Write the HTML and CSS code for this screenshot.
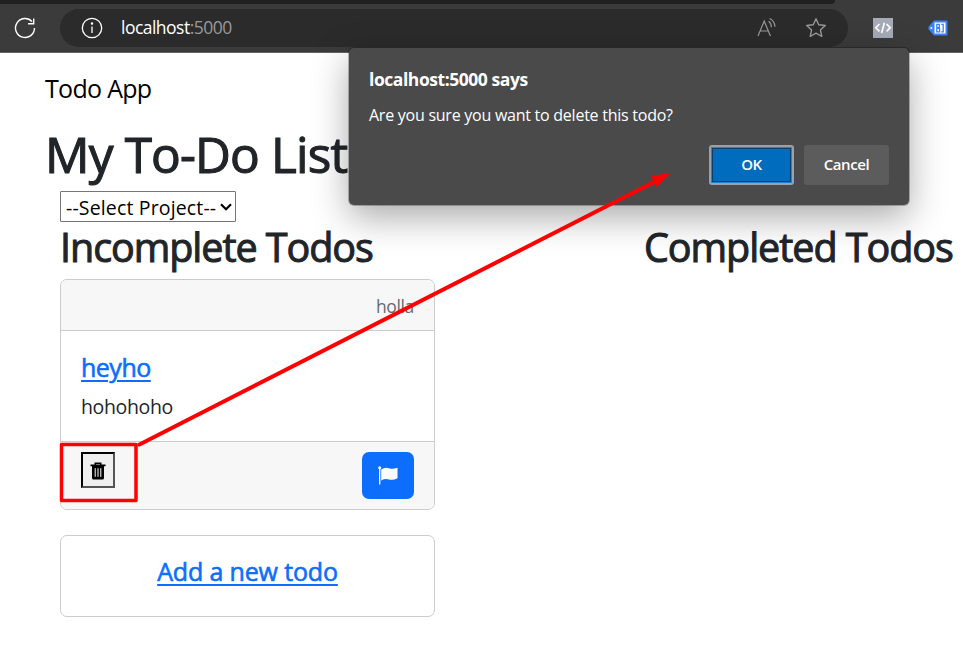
FILE: index.html
```html
<!DOCTYPE html>
<html lang="en">
<head>
<meta charset="utf-8">
<title>Todo App</title>
<link rel="stylesheet" href="styles.css">
</head>
<body>
<header class="browser">
  <div class="tab-strip"></div>
  <div class="toolbar">
    <svg class="reload" width="24" height="24" viewBox="0 0 24 24" fill="none" stroke="#fff" stroke-width="1.4"><path d="M21.500 12A9.500 9.500 0 1 1 19 5.600M20.700 2.500v5.200h-5.600"/></svg>
    <div class="address">
      <svg class="info" width="22" height="22" viewBox="0 0 22 22" fill="none" stroke="#fff" stroke-width="1.3"><circle cx="11" cy="11" r="9.700"/><path d="M11 9.500V16"/><circle cx="11" cy="6.600" r=".6" fill="#fff"/></svg>
      <span class="url">localhost<span class="port">:5000</span></span>
      <svg class="read" width="22" height="22" viewBox="0 0 22 22" fill="none" stroke="#999" stroke-width="1.2"><path d="M2 19 8.200 4l6.200 15M4.200 14h8M12.600 4.200q2.600 1.600 2.800 6M13.600 1.500q5 2.500 5.400 8.200"/></svg>
      <svg class="star" width="22" height="22" viewBox="0 0 22 22" fill="none" stroke="#999" stroke-width="1.4" stroke-linejoin="round"><path d="m11 1.800 2.700 6 6.600.7-4.900 4.400 1.400 6.600-5.800-3.400-5.800 3.400 1.400-6.600-4.900-4.400 6.600-.7z"/></svg>
    </div>
    <svg class="ext-code" width="20" height="20" viewBox="0 0 20 20"><path fill="#a5abb7" d="M0 0h20v20H0z"/><path d="M6.400 6 2.800 9.700l3.600 3.700M13.600 6l3.600 3.700-3.600 3.700M11.400 4.800 8.600 15" fill="none" stroke="#fff" stroke-width="1.700"/></svg>
    <svg class="ext-tag" width="20" height="16" viewBox="0 0 20 16"><path fill="#3b82f6" d="M6 .5h12.500a1 1 0 0 1 1 1v13a1 1 0 0 1-1 1H6L.5 9.200V6.800z"/><circle cx="3.400" cy="8" r="1" fill="#fff"/><path fill="#fff" d="M6.500 2.500h11v11h-11z"/><path d="M8.800 4.400h2.500v3.200H8.800zM8.800 8.300h2.800v3.500H8.800zM13.200 4.300h2v7.500h-2" fill="none" stroke="#3b82f6" stroke-width="1.300"/></svg>
  </div>
</header>

<main class="page">
  <nav class="brand"><span>Todo App</span></nav>
  <h1>My To-Do List</h1>
  <div class="content">
    <div class="picker">
      <select class="project"><option>--Select Project--</option></select>
      <svg class="chevron" width="12" height="8" viewBox="0 0 12 8"><path d="m1 1.200 5 5 5-5" fill="none" stroke="#000" stroke-width="2.200"/></svg>
    </div>
    <div class="columns">
      <section class="incomplete">
        <h2>Incomplete Todos</h2>
        <article class="card">
          <div class="card-head"><span>holla</span></div>
          <div class="card-body">
            <h5><a href="#">heyho</a></h5>
            <p>hohohoho</p>
          </div>
          <div class="card-foot">
            <button class="delete" aria-label="Delete"><svg width="16" height="18" viewBox="0 0 16 18"><path d="M5.300 3V1.200h5.400V3M.5 3.400h15" fill="none" stroke="#000" stroke-width="1.600"/><path d="M2 4h12v12q0 1.600-1.600 1.600H3.600Q2 17.600 2 16z"/><path d="M5.200 6.200v8.600M8 6.200v8.600M10.800 6.200v8.600" stroke="#fff" stroke-width="1"/></svg></button>
            <button class="flag" aria-label="Complete"><svg width="20" height="19" viewBox="0 0 20 19" fill="#fff"><circle cx="1.700" cy="1.700" r="1.500"/><path d="M1 2h1.400v16.500H1zM3.200 3.500Q7 .8 11 2.200q4 1.500 8.500-.5v10.500q-4.500 2.500-8.500 1.200-4-1.200-7.800 1z"/></svg></button>
          </div>
        </article>
        <article class="card add"><h5><a href="#">Add a new todo</a></h5></article>
      </section>
      <section class="completed"><h2>Completed Todos</h2></section>
    </div>
  </div>
</main>

<div class="dialog" role="dialog">
  <h3>localhost:5000 says</h3>
  <p>Are you sure you want to delete this todo?</p>
  <div class="actions">
    <button class="ok">OK</button>
    <button class="cancel">Cancel</button>
  </div>
</div>

<svg class="annotation" width="963" height="663" viewBox="0 0 963 663">
  <rect x="61.500" y="444.500" width="74.500" height="56" fill="none" stroke="#f00" stroke-width="3.500" stroke-linejoin="round"/>
  <path d="M139.500 444.500 656 181" stroke="#f00" stroke-width="4" stroke-linecap="round"/>
  <path d="m671 173-20 3 5.500 11z" fill="#f00"/>
</svg>
</body>
</html>
```
FILE: styles.css
```css
* { box-sizing: border-box; }
body {
  margin: 0;
  position: relative;
  width: 963px;
  height: 663px;
  overflow: hidden;
  background: #fff;
  color: #212529;
  font-family: "Open Sans", "Noto Sans", sans-serif;
  font-size: 20px;
  line-height: 30px;
}
h1, h2, h3, h5, p { margin: 0; }
h1, h2, h5 { font-weight: 400; }
button { padding: 0; font-family: inherit; }
svg { display: block; flex: none; }

.browser { height: 53px; background: #3b3b3b; border-bottom: 1px solid #626262; }
.tab-strip { width: 835px; height: 4px; background: #202020; border-radius: 0 0 5px 0; }
.toolbar { display: flex; align-items: center; height: 48px; padding-left: 13px; }
.address {
  display: flex; align-items: center;
  width: 788px; height: 38px;
  margin-left: 23px; padding-left: 21px;
  border-radius: 19px; background: #2b2b2b;
}
.url { width: 120px; margin: -2px 0 0 18px; color: #fff; font-size: 17.500px; letter-spacing: -.52px; white-space: nowrap; }
.port { color: #999; }
.read { margin-left: 515px; }
.star { margin-left: 27px; }
.ext-code { margin-left: 25px; }
.ext-tag { margin-left: 35px; }

.page { padding: 20px 0 0 45px; }
.brand { height: 30px; color: #000; font-size: 25px; letter-spacing: -.7px; }
h1 { margin-top: 21px; height: 62px; font-size: 49.500px; line-height: 60px; letter-spacing: -.85px; -webkit-text-stroke: 1.100px #212529; }
.content { padding: 5px 0 0 15px; }
.picker { position: relative; width: 176px; height: 31px; }
.project {
  appearance: none;
  display: block; width: 176px; height: 31px; padding: 2px 5px 0;
  border: 1px solid #767676; border-radius: 1px; background: #fff; color: #000;
  font: 19.500px/27px "Open Sans", sans-serif; letter-spacing: .15px;
}
.chevron { position: absolute; right: 4px; top: 12px; }
.columns { display: grid; grid-template-columns: 584px 1fr; }
h2 { height: 57px; padding-top: 1px; font-size: 39.500px; line-height: 48px; letter-spacing: -1.050px; white-space: nowrap; -webkit-text-stroke: 1px #212529; }
.card { width: 375px; border: 1px solid #ccc; border-radius: 7px; overflow: hidden; background: #fff; }
.card-head { height: 51px; padding: 11px 20px; border-bottom: 1px solid #ccc; background: #f7f7f7; color: #666a6e; text-align: right; font-size: 17.500px; letter-spacing: -.35px; }
.card-body { height: 110px; padding: 21px 20px; }
h5 { font-size: 25px; line-height: 30px; letter-spacing: -.5px; }
h5 a { color: #0d6efd; text-decoration: underline; text-decoration-thickness: 2px; text-underline-offset: 3px; -webkit-text-stroke: .6px #0d6efd; }
.card-body p { margin-top: 10px; font-size: 19.500px; letter-spacing: -.35px; }
.card-foot { display: flex; justify-content: space-between; align-items: flex-start; height: 68px; padding: 10px 20px; border-top: 1px solid #ccc; background: #f7f7f7; }
.delete { display: grid; place-items: center; width: 34px; height: 36px; padding-top: 1px; border: 2px solid; border-color: #000 #555 #555 #000; background: #efefef; }
.flag { display: grid; place-items: center; width: 52px; height: 47px; border: 0; border-radius: 7px; background: #0d6efd; }
.add { height: 82px; margin-top: 25px; padding-top: 20px; text-align: center; }
.add h5 { letter-spacing: -.15px; }

.dialog {
  position: absolute; left: 349px; top: 48px; width: 560px; height: 157px;
  padding: 19px 20px 20px;
  border-radius: 5px; background: #4a4a4a; color: #fff;
  box-shadow: 0 0 0 1px rgba(0,0,0,.25), 0 12px 36px rgba(0,0,0,.34);
}
.dialog h3 { font-size: 17.500px; font-weight: 700; line-height: 24px; letter-spacing: -.45px; }
.dialog p { margin-top: 12px; font-size: 16px; line-height: 24px; letter-spacing: -.25px; }
.actions { display: flex; justify-content: flex-end; gap: 10px; margin-top: 18px; }
.actions button { width: 85px; height: 40px; padding-bottom: 2px; border: 0; border-radius: 3px; color: #fff; font-size: 15px; font-weight: 600; letter-spacing: -.4px; }
.actions .ok { background: #006cbe; border: 2px solid #9ba1aa; box-shadow: inset 0 0 0 1px #2c7fc9, inset 0 0 0 2px #0b4170; }
.actions .cancel { background: #5c5c5c; }
.annotation { position: absolute; left: 0; top: 0; pointer-events: none; }
```
